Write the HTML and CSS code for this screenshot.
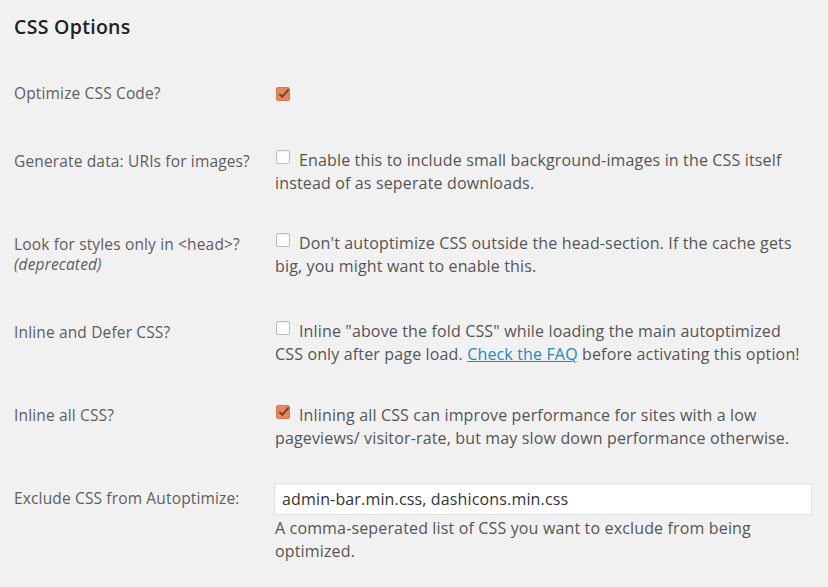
FILE: index.html
```html
<!DOCTYPE html>
<html lang="en">
<head>
<meta charset="utf-8">
<title>CSS Options</title>
<link rel="stylesheet" href="styles.css">
</head>
<body>
<div class="page">
  <h2 class="title">CSS Options</h2>
  <div class="form">
    <div class="row">
      <div class="label">Optimize CSS Code?</div>
      <div class="field"><span class="cb checked solo"><svg viewBox="0 0 14 14" width="14" height="14"><polyline points="3.3,6.8 6.2,9.8 12.6,2.6" /></svg></span></div>
    </div>
    <div class="row">
      <div class="label">Generate data: URIs for images?</div>
      <div class="field"><span class="cb"></span>Enable this to include small background-images in the CSS itself instead of as seperate downloads.</div>
    </div>
    <div class="row">
      <div class="label">Look for styles only in &lt;head&gt;?<br><em>(deprecated)</em></div>
      <div class="field"><span class="cb"></span>Don't autoptimize CSS outside the head-section. If the cache gets big, you might want to enable this.</div>
    </div>
    <div class="row">
      <div class="label">Inline and Defer CSS?</div>
      <div class="field"><span class="cb"></span>Inline "above the fold CSS" while loading the main autoptimized CSS only after page load. <a class="link" href="#">Check the FAQ</a> before activating this option!</div>
    </div>
    <div class="row">
      <div class="label">Inline all CSS?</div>
      <div class="field"><span class="cb checked"><svg viewBox="0 0 14 14" width="14" height="14"><polyline points="3.3,6.8 6.2,9.8 12.6,2.6" /></svg></span>Inlining all CSS can improve performance for sites with a low pageviews/ visitor-rate, but may slow down performance otherwise.</div>
    </div>
    <div class="row">
      <div class="label">Exclude CSS from Autoptimize:</div>
      <div class="field field-input">
        <input class="text-input" type="text" value="admin-bar.min.css, dashicons.min.css">
        <p class="description">A comma-seperated list of CSS you want to exclude from being optimized.</p>
      </div>
    </div>
  </div>
</div>
</body>
</html>
```
FILE: styles.css
```css
html, body {
  margin: 0;
  padding: 0;
  background: #f1f1f1;
}

body {
  font-family: "Open Sans", "Liberation Sans", sans-serif;
  font-size: 15.5px;
  color: #555;
}

.page {
  padding: 14px 16px 0 14px;
}

.title {
  margin: 0 0 21.5px;
  font-size: 19.5px;
  line-height: 25px;
  font-weight: 600;
  letter-spacing: 0.3px;
  color: #222;
}

.row {
  display: grid;
  grid-template-columns: 261px 1fr;
}

.label {
  padding: 22px 0 26px;
  line-height: 20px;
  letter-spacing: 0.15px;
  color: #5e5e5e;
}

.label em {
  font-style: italic;
}

.field {
  padding: 20.5px 0 16.8px;
  font-size: 16px;
  line-height: 23px;
  letter-spacing: 0.15px;
  color: #555;
}

.cb {
  display: inline-block;
  box-sizing: border-box;
  width: 14px;
  height: 14px;
  margin: 0 9px 2px 1px;
  vertical-align: baseline;
  background: #fff;
  border: 1px solid #bdbdbd;
  border-radius: 2px;
  box-shadow: inset 0 1px 2px rgba(0, 0, 0, 0.08);
  position: relative;
}

.cb svg {
  display: block;
  position: absolute;
  left: -1px;
  top: -1px;
  overflow: visible;
}

.cb svg polyline {
  fill: none;
  stroke: #5e4638;
  stroke-width: 1.9;
}

.cb.checked {
  background: #e8875b;
  border-color: #d47a50;
  box-shadow: none;
}

.cb.solo {
  vertical-align: middle;
  margin-bottom: 0;
}

.link {
  color: #2389b9;
  text-decoration: underline;
}

.field-input {
  padding-top: 17px;
}

.text-input {
  display: block;
  box-sizing: border-box;
  width: calc(100% + 1px);
  margin: 0 0 0 -1px;
  height: 32px;
  padding: 0 7px;
  font-family: "Open Sans", "Liberation Sans", sans-serif;
  font-size: 16px;
  letter-spacing: 0.15px;
  color: #333;
  background: #fff;
  border: 1px solid #e2e2e2;
  box-shadow: inset 0 1px 2px rgba(0, 0, 0, 0.05);
  outline: none;
}

.description {
  margin: 2px 0 0;
  line-height: 23px;
  color: #555;
}
```
